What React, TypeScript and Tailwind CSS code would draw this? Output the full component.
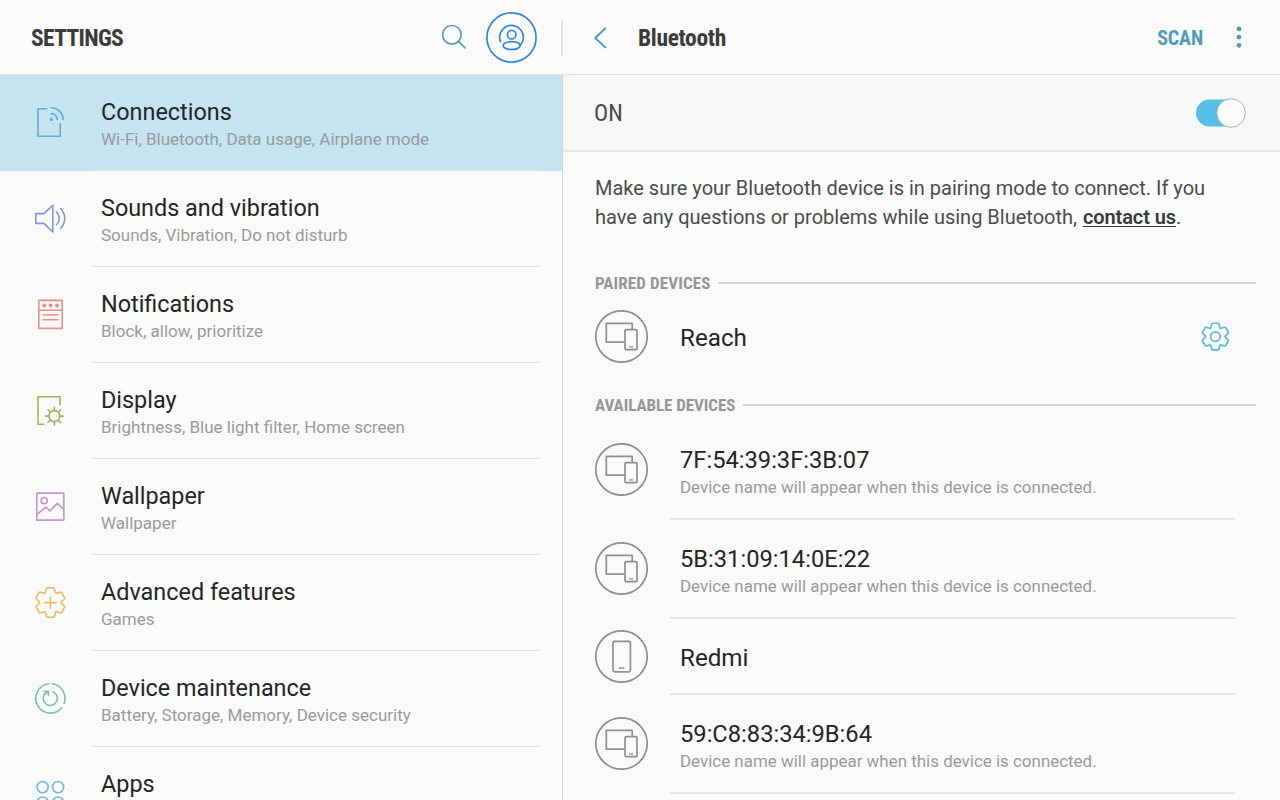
import type { ReactNode } from 'react';

function gearPath(scale: number) {
  const rot = (x: number, y: number, k: number) => {
    const a = (k * Math.PI) / 3;
    const rx = (x * Math.cos(a) - y * Math.sin(a)) * scale;
    const ry = (x * Math.sin(a) + y * Math.cos(a)) * scale;
    return `${rx.toFixed(2)} ${ry.toFixed(2)}`;
  };
  let d = '';
  for (let k = 0; k < 6; k++) {
    d += `${k === 0 ? 'M' : 'L'}${rot(-4.7, -11.7, k)}`;
    d += `L${rot(-3.9, -14.3, k)}Q${rot(-3.6, -15, k)} ${rot(-2.9, -15, k)}`;
    d += `L${rot(2.9, -15, k)}Q${rot(3.6, -15, k)} ${rot(3.9, -14.3, k)}`;
    d += `L${rot(4.7, -11.7, k)}Q${rot(4.7, -8.2, k)} ${rot(-4.7, -11.7, k + 1)}`;
  }
  return d + 'Z';
}

function Icon({ children, color }: { children: ReactNode; color: string }) {
  return (
    <svg width="36" height="36" viewBox="-18.2 -18.4 36 36" fill="none" strokeWidth="1.6" strokeLinecap="round" strokeLinejoin="round" className={color}>
      {children}
    </svg>
  );
}

const items = [
  {
    title: 'Connections',
    sub: 'Wi-Fi, Bluetooth, Data usage, Airplane mode',
    icon: (
      <Icon color="stroke-[#62abd6]">
        <path d="M-3.5 -13.7H-12.2V13.8H10V1.5" />
        <path d="M1 -14.6A11.8 11.8 0 0 1 12.9 -3M1 -8.8A6 6 0 0 1 7 -3" />
        <circle cx="1.2" cy="-3" r="1.6" fill="#62abd6" stroke="none" />
      </Icon>
    ),
  },
  {
    title: 'Sounds and vibration',
    sub: 'Sounds, Vibration, Do not disturb',
    icon: (
      <Icon color="stroke-[#8199da]">
        <path d="M-14.4 -4.8H-6.3L2.6 -13V13.5L-6.3 5H-14.4Z" />
        <path d="M6.3 -6.4A9 9 0 0 1 6.3 6.4M10.4 -9.6A13.5 13.5 0 0 1 10.4 9.8" />
      </Icon>
    ),
  },
  {
    title: 'Notifications',
    sub: 'Block, allow, prioritize',
    icon: (
      <Icon color="stroke-[#ea8f85]">
        <rect x="-11.4" y="-14" width="23.4" height="28" rx="0.5" />
        <path d="M-11.4 -4.2H12M-7 0.6H7.7M-7 5.3H7.7" />
        <g fill="#ea8f85" stroke="none">
          <circle cx="-6" cy="-8.8" r="2" />
          <circle cx="0.4" cy="-8.8" r="2" />
          <circle cx="6.8" cy="-8.8" r="2" />
        </g>
      </Icon>
    ),
  },
  {
    title: 'Display',
    sub: 'Brightness, Blue light filter, Home screen',
    icon: (
      <Icon color="stroke-[#97bb5c]">
        <path d="M-6.3 13.9H-12.2V-13.7H9.8V-5.6" />
        <circle cx="4.2" cy="5.7" r="5.5" />
        <path d="M4.2 -3.1V0M4.2 11.3V14.5M-4.7 5.7H-1.5M9.9 5.7H13.2M-2.1 -0.6L0.2 1.7M8.2 9.7L10.5 12M-2.1 12L0.2 9.7M8.2 1.7L10.5 -0.6" />
      </Icon>
    ),
  },
  {
    title: 'Wallpaper',
    sub: 'Wallpaper',
    icon: (
      <Icon color="stroke-[#c195d0]">
        <rect x="-13.4" y="-13.3" width="27" height="27" rx="0.4" />
        <circle cx="-6" cy="-5.8" r="3.1" />
        <path d="M-13 7.7L-4.3 0.8L-0.3 4.6L7 -3L13.3 2.8" />
      </Icon>
    ),
  },
  {
    title: 'Advanced features',
    sub: 'Games',
    icon: (
      <Icon color="stroke-[#edb862]">
        <path d={gearPath(0.98)} transform="translate(0.2 0.1)" />
        <path d="M-5.4 0.2H5.8M0.2 -5.4V5.8" />
      </Icon>
    ),
  },
  {
    title: 'Device maintenance',
    sub: 'Battery, Storage, Memory, Device security',
    icon: (
      <Icon color="stroke-[#7dc1af]">
        <path d="M-1.4 -14.6A14.7 14.7 0 1 0 11.6 9.4M13.9 5A14.7 14.7 0 0 0 2 -14.6" />
        <path d="M2.8 -6.6A7.1 7.1 0 1 1 -4.8 -5.2M-6.2 -7.2H-1.8V-2.8M-1.8 -7.2L-4.8 -4.6" />
      </Icon>
    ),
  },
  {
    title: 'Apps',
    sub: '',
    icon: (
      <Icon color="stroke-[#78b6dc]">
        <circle cx="-7.6" cy="-7.3" r="5.6" />
        <circle cx="7.9" cy="-7.3" r="5.6" />
        <circle cx="-7.6" cy="8.2" r="5.6" />
        <circle cx="7.9" cy="8.2" r="5.6" />
      </Icon>
    ),
  },
];

function DeviceIcon({ phone = false }: { phone?: boolean }) {
  return (
    <svg width="53" height="53" viewBox="0 0 53 53" fill="none" stroke="#8f8f8f" strokeWidth="1.7" strokeLinejoin="round" className="shrink-0">
      <circle cx="26.5" cy="26.5" r="25.7" />
      {phone ? (
        <>
          <rect x="18" y="11.4" width="17.4" height="30.4" rx="1.6" />
          <path d="M23.8 38H29.4" strokeWidth="1.5" />
        </>
      ) : (
        <>
          <path d="M30 32.2H11.3V13.3H37.2V20" />
          <rect x="30" y="19.7" width="12" height="20" rx="1.3" />
          <path d="M34.2 36.9H38" strokeWidth="1.3" />
        </>
      )}
    </svg>
  );
}

function SectionLabel({ children, fit }: { children: string; fit: string }) {
  return (
    <div className="flex h-5 items-center pl-8 pr-6">
      <h2 className={`shrink-0 whitespace-nowrap text-[17px] font-bold leading-5 text-[#979797] font-stretch-condensed [font-family:'Roboto_Condensed',Roboto,sans-serif] ${fit}`}>{children}</h2>
      <div className="h-0.5 grow bg-[#d2d2d2]" />
    </div>
  );
}

const devices = [
  { name: '7F:54:39:3F:3B:07', row: 'h-[99px] pt-[22px]' },
  { name: '5B:31:09:14:0E:22', row: 'h-[99px] pt-[22px]' },
  { name: 'Redmi', phone: true, row: 'h-[76px] pt-[11px]' },
  { name: '59:C8:83:34:9B:64', row: 'h-[99px] pt-[22px]' },
];

export default function App() {
  return (
    <div className="flex h-[800px] w-[1280px] flex-col overflow-hidden bg-[#fafafa] text-[#252525] [font-family:Roboto,sans-serif]">
      <header className="flex h-[75px] shrink-0 items-center border-b border-[#e4e4e4] [font-family:'Roboto_Condensed',Roboto,sans-serif] font-stretch-condensed">
        <div className="flex h-full w-[561px] items-center pl-[31px] pr-6">
          <h1 className="grow pt-[3px] text-[23.5px] font-bold tracking-[-0.65px] text-[#3b3b3b]">SETTINGS</h1>
          <svg width="28" height="28" viewBox="0 0 28 28" fill="none" stroke="#56a0bd" strokeWidth="1.7" strokeLinecap="round" className="mr-[19px]">
            <circle cx="12.9" cy="11.8" r="9.3" />
            <path d="M19.5 18.4L26 24.8" />
          </svg>
          <svg width="51" height="51" viewBox="0 0 51 51" fill="none" stroke="#3488d8" strokeWidth="1.7" strokeLinecap="round">
            <circle cx="25.5" cy="25.5" r="24.6" />
            <path d="M14.5 29.8A11.9 11.9 0 1 1 34.2 33.4" />
            <circle cx="25.7" cy="22.7" r="4.3" />
            <ellipse cx="25.7" cy="33.6" rx="8.6" ry="3.9" />
          </svg>
        </div>
        <div className="h-[37px] w-0.5 bg-[#e4e4e4]" />
        <div className="flex grow items-center pl-[30px] pr-[33px]">
          <svg width="16" height="24" viewBox="0 0 16 24" fill="none" stroke="#509cba" strokeWidth="1.9" strokeLinecap="round" strokeLinejoin="round">
            <path d="M12.4 3.3L2.2 13L12.4 22.4" />
          </svg>
          <h1 className="ml-[29px] grow pt-[3px] text-[23.5px] font-bold tracking-[-0.33px] text-[#3b3b3b]">Bluetooth</h1>
          <button className="pt-px text-[20px] font-bold tracking-[-0.15px] text-[#4f9dbb]">SCAN</button>
          <svg width="16" height="24" viewBox="0 0 16 24" fill="#4f9dbb" className="ml-7">
            <circle cx="8" cy="3.9" r="2.4" />
            <circle cx="8" cy="12.1" r="2.4" />
            <circle cx="8" cy="20.3" r="2.4" />
          </svg>
        </div>
      </header>

      <div className="flex min-h-0 grow">
        <nav className="w-[563px] shrink-0 border-r border-black/15">
          {items.map((it, i) => (
            <div key={it.title} className={i === 0 ? 'flex h-24 bg-[#c4e4f0]' : 'flex h-24'}>
              <div className="w-[93px] pl-8 pt-[29px]">{it.icon}</div>
              <div className="w-[446px] border-b border-[#e2e2e2] pl-2 pt-[23px]">
                <div className="text-[23.4px] leading-7">{it.title}</div>
                <div className="text-[17px] leading-[26px] text-[#9a9a9a]">{it.sub}</div>
              </div>
            </div>
          ))}
        </nav>

        <main className="grow">
          <div className="flex h-[77px] items-center justify-between border-b-2 border-[#e6e6e6] bg-[#f7f7f7] pl-[31px] pr-[34px]">
            <span className="pt-[3px] text-[23.5px] text-[#4a4a4a] font-stretch-condensed [font-family:'Roboto_Condensed',Roboto,sans-serif]">ON</span>
            <svg width="50" height="30" viewBox="0 0 50 30">
              <rect x="0" y="1.5" width="48" height="27" rx="13.5" fill="#57bfe3" />
              <circle cx="35.1" cy="15" r="14.3" fill="#fafafa" stroke="#aaaaaa" strokeWidth="0.9" />
            </svg>
          </div>
          <p className="h-[121px] pl-8 pt-[22px] text-[20px] leading-[29px] text-[#4c4c4c]">
            Make sure your Bluetooth device is in pairing mode to connect. If you
            <br />
            have any questions or problems while using Bluetooth,{' '}
            <a className="ml-px font-semibold tracking-[-0.1px] text-[#3a3a3a] underline decoration-1 underline-offset-2">contact us</a>.
          </p>
          <SectionLabel fit="w-[123px] tracking-[0.13px]">PAIRED DEVICES</SectionLabel>
          <div className="flex h-[102px] items-start pl-8 pr-12 pt-[17px]">
            <DeviceIcon />
            <div className="ml-8 mt-3 grow text-[24.2px] leading-8">Reach</div>
            <svg width="32" height="32" viewBox="-16 -16 32 32" fill="none" stroke="#5bb9dd" strokeWidth="1.7" strokeLinejoin="round" className="mt-[11px]">
              <path d={gearPath(0.89)} transform="translate(-0.6 -0.4)" />
              <circle cx="-0.6" cy="-0.4" r="4.8" />
            </svg>
          </div>
          <SectionLabel fit="w-[148px] tracking-[-0.06px]">AVAILABLE DEVICES</SectionLabel>
          <div className="pt-1.5">
            {devices.map((d) => (
              <div key={d.name} className="flex pl-8 pr-[45px]">
                <div className={`w-[75px] ${d.row}`}>
                  <DeviceIcon phone={d.phone} />
                </div>
                <div className={`grow border-b-2 border-[#e4e4e4] pl-2.5 ${d.row}`}>
                  {d.phone ? (
                    <div className="mt-3.5 text-[24.2px] leading-7">{d.name}</div>
                  ) : (
                    <>
                      <div className="mt-[3px] text-[23.7px] leading-7">{d.name}</div>
                      <div className="text-[16.95px] leading-[26px] text-[#9a9a9a]">Device name will appear when this device is connected.</div>
                    </>
                  )}
                </div>
              </div>
            ))}
          </div>
        </main>
      </div>
    </div>
  );
}
